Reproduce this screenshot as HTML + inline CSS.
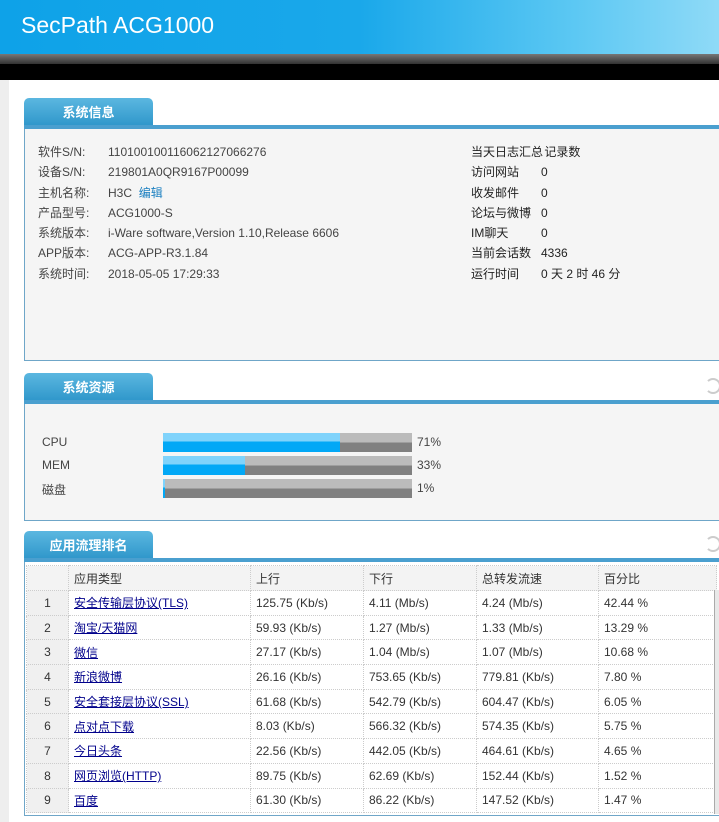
<!DOCTYPE html>
<html><head><meta charset="utf-8"><style>
*{margin:0;padding:0;box-sizing:border-box}
body{width:719px;height:822px;overflow:hidden;background:#fff;font-family:"Liberation Sans","Noto Sans CJK SC",sans-serif;font-size:12px;color:#333;position:relative}
.hdr{position:absolute;left:0;top:0;width:719px;height:54px;background:linear-gradient(90deg,#0ea2e8 0%,#1aa8ea 50%,#5cc8f3 80%,#8fdaf7 100%)}
.hdr .t{position:absolute;left:21px;top:12px;font-size:23px;color:#fff}
.bar1{position:absolute;left:0;top:54px;width:719px;height:10px;background:linear-gradient(#777,#333)}
.bar2{position:absolute;left:0;top:64px;width:719px;height:16px;background:#000}
.side{position:absolute;left:0;top:80px;width:9px;height:742px;background:#eee}
.tab{position:absolute;left:24px;width:129px;height:31px;border-radius:5px 5px 0 0;background:linear-gradient(#5bb7e0,#2a93c8);color:#fff;font-weight:bold;font-size:13px;text-align:center;line-height:30px}
.line{position:absolute;left:24px;width:695px;height:4px;background:#4a9fcf}
.pan{position:absolute;left:24px;width:700px;border:1px solid #6fa6c8;border-top:none;background:#f5f5f5}
.r{position:absolute;white-space:nowrap;color:#444}
.pb{position:absolute;left:163px;width:249px;height:19px;background:linear-gradient(#bbb 0,#bbb 50%,#808080 50%)}
.pb i{position:absolute;left:0;top:0;height:19px;background:linear-gradient(#80d3fb 0,#80d3fb 45%,#02a8f6 45%)}
.pl{position:absolute;left:417px;color:#444}
table{position:absolute;left:26px;top:565px;border-collapse:collapse;font-size:12px}
td{height:24.7px;border:1px dotted #ccc;padding-left:5px;color:#333;background:#fff}
tr.h td{background:#f3f3f3;height:25px}
td.n{background:#f0f0f0;text-align:center;padding:0;width:42px}
td a{color:#00008b;text-decoration:underline}
.ref{position:absolute;left:705px;width:16px;height:16px;border:2px solid #ccc;border-radius:50%;border-left-color:transparent}
</style></head><body>
<div class="hdr"><div class="t">SecPath ACG1000</div></div>
<div class="bar1"></div><div class="bar2"></div><div class="side"></div>

<div class="tab" style="top:98px">系统信息</div>
<div class="line" style="top:125px"></div>
<div class="pan" style="top:129px;height:232px"></div>
<div class="r" style="left:38px;top:142px;line-height:20.3px">软件S/N:<br>设备S/N:<br>主机名称:<br>产品型号:<br>系统版本:<br>APP版本:<br>系统时间:</div>
<div class="r" style="left:108px;top:142px;line-height:20.3px">110100100116062127066276<br>219801A0QR9167P00099<br>H3C &nbsp;<span style="color:#1a7fc0">编辑</span><br>ACG1000-S<br>i-Ware software,Version 1.10,Release 6606<br>ACG-APP-R3.1.84<br>2018-05-05 17:29:33</div>
<div class="r" style="left:471px;top:142px;line-height:20.3px;color:#222">当天日志汇总<br>访问网站<br>收发邮件<br>论坛与微博<br>IM聊天<br>当前会话数<br>运行时间</div>
<div class="r" style="left:541px;top:142px;line-height:20.3px;color:#222">&nbsp;记录数<br>0<br>0<br>0<br>0<br>4336<br>0 天 2 时 46 分</div>

<div class="tab" style="top:373px">系统资源</div>
<div class="ref" style="top:378px"></div>
<div class="line" style="top:400px"></div>
<div class="pan" style="top:404px;height:117px"></div>
<div class="r" style="left:42px;top:435px">CPU</div>
<div class="r" style="left:42px;top:458px">MEM</div>
<div class="r" style="left:42px;top:481px">磁盘</div>
<div class="pb" style="top:433px"><i style="width:177px"></i></div>
<div class="pb" style="top:456px"><i style="width:82px"></i></div>
<div class="pb" style="top:479px"><i style="width:2px"></i></div>
<div class="pl" style="top:435px">71%</div>
<div class="pl" style="top:458px">33%</div>
<div class="pl" style="top:481px">1%</div>

<div class="tab" style="top:531px">应用流理排名</div>
<div class="ref" style="top:536px"></div>
<div class="line" style="top:558px"></div>
<div class="pan" style="top:562px;height:254px;background:#fff"></div>
<table>
<tr class="h"><td class="n"></td><td style="width:182px">应用类型</td><td style="width:113px">上行</td><td style="width:113px">下行</td><td style="width:122px">总转发流速</td><td style="width:118px">百分比</td></tr>
<tr><td class="n">1</td><td><a>安全传输层协议(TLS)</a></td><td>125.75 (Kb/s)</td><td>4.11 (Mb/s)</td><td>4.24 (Mb/s)</td><td>42.44 %</td></tr>
<tr><td class="n">2</td><td><a>淘宝/天猫网</a></td><td>59.93 (Kb/s)</td><td>1.27 (Mb/s)</td><td>1.33 (Mb/s)</td><td>13.29 %</td></tr>
<tr><td class="n">3</td><td><a>微信</a></td><td>27.17 (Kb/s)</td><td>1.04 (Mb/s)</td><td>1.07 (Mb/s)</td><td>10.68 %</td></tr>
<tr><td class="n">4</td><td><a>新浪微博</a></td><td>26.16 (Kb/s)</td><td>753.65 (Kb/s)</td><td>779.81 (Kb/s)</td><td>7.80 %</td></tr>
<tr><td class="n">5</td><td><a>安全套接层协议(SSL)</a></td><td>61.68 (Kb/s)</td><td>542.79 (Kb/s)</td><td>604.47 (Kb/s)</td><td>6.05 %</td></tr>
<tr><td class="n">6</td><td><a>点对点下载</a></td><td>8.03 (Kb/s)</td><td>566.32 (Kb/s)</td><td>574.35 (Kb/s)</td><td>5.75 %</td></tr>
<tr><td class="n">7</td><td><a>今日头条</a></td><td>22.56 (Kb/s)</td><td>442.05 (Kb/s)</td><td>464.61 (Kb/s)</td><td>4.65 %</td></tr>
<tr><td class="n">8</td><td><a>网页浏览(HTTP)</a></td><td>89.75 (Kb/s)</td><td>62.69 (Kb/s)</td><td>152.44 (Kb/s)</td><td>1.52 %</td></tr>
<tr><td class="n">9</td><td><a>百度</a></td><td>61.30 (Kb/s)</td><td>86.22 (Kb/s)</td><td>147.52 (Kb/s)</td><td>1.47 %</td></tr>
</table>
<div style="position:absolute;left:714px;top:590px;width:6px;height:224px;background:#e8e8e8;border-left:1px solid #aaa"></div>
</body></html>
